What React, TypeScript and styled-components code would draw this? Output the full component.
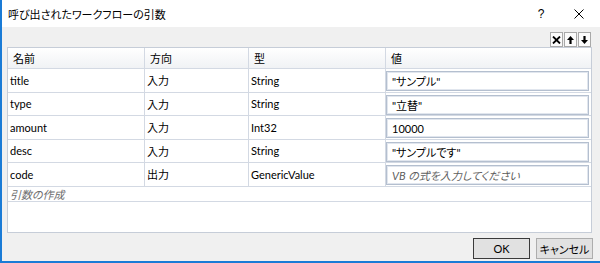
import React from "react";
import styled, { createGlobalStyle } from "styled-components";

const GlobalStyle = createGlobalStyle`
  html, body { margin: 0; padding: 0; background: #ffffff; }
  * { box-sizing: border-box; }
`;

const FONT = `"Lato", "Noto Sans CJK JP", sans-serif`;
const LINE = "#d3d9e3";
const COLS = "137px 104px 137px 1fr";

const Window = styled.div`
  width: 600px;
  height: 263px;
  border-left: 2px solid #1a7bd6;
  border-bottom: 2px solid #1a7bd6;
  background: #f0f0f0;
  display: flex;
  flex-direction: column;
  font-family: ${FONT};
  font-size: 11px;
  color: #000;
  font-feature-settings: "palt";
`;

const TitleBar = styled.div`
  height: 27px;
  flex: 0 0 27px;
  background: #ffffff;
  display: flex;
  align-items: center;
  padding: 0 2px 0 6px;
`;

const TitleText = styled.div`
  font-size: 11px;
  flex: 1;
`;

const CaptionButton = styled.div`
  width: 38px;
  height: 27px;
  display: flex;
  align-items: center;
  justify-content: center;
  font-family: "Liberation Sans", sans-serif;
  font-size: 12px;
`;

const Body = styled.div`
  flex: 1;
  display: flex;
  flex-direction: column;
  padding: 5px 7px 3px 5px;
`;

const Toolbar = styled.div`
  height: 15px;
  display: flex;
  justify-content: flex-end;
  gap: 1px;
  padding-right: 2px;
`;

const ToolButton = styled.div`
  width: 13px;
  height: 15px;
  border: 1px solid #a9a9a9;
  background: #fbfbfb;
  display: flex;
  align-items: center;
  justify-content: center;
`;

const Grid = styled.div`
  height: 186px;
  margin-right: 1px;
  border: 1px solid #c6cdd8;
  background: #ffffff;
  display: flex;
  flex-direction: column;
`;

const Row = styled.div<{ $h: string }>`
  display: grid;
  grid-template-columns: ${COLS};
  height: ${(p) => p.$h};
  flex: 0 0 ${(p) => p.$h};
`;

const HeaderCell = styled.div<{ $last?: boolean }>`
  display: flex;
  align-items: center;
  padding-left: 5px;
  background: linear-gradient(#ffffff, #f0f2f5);
  border-bottom: 1px solid ${LINE};
  border-right: ${(p) => (p.$last ? "none" : `1px solid ${LINE}`)};
`;

const Cell = styled.div<{ $last?: boolean }>`
  display: flex;
  align-items: center;
  padding-left: 2px;
  border-bottom: 1px solid ${LINE};
  border-right: ${(p) => (p.$last ? "none" : `1px solid ${LINE}`)};
  white-space: nowrap;
  overflow: hidden;
`;

const ValueCell = styled.div`
  padding: 2px 2px 0 0;
  border-bottom: 1px solid ${LINE};
`;

const TextBox = styled.div<{ $placeholder?: boolean }>`
  height: 20px;
  border: 1px solid #b4bfcf;
  box-shadow: inset 0 0 0 1px #e1e6ee;
  background: #ffffff;
  display: flex;
  align-items: center;
  padding-left: 5px;
  white-space: nowrap;
  color: ${(p) => (p.$placeholder ? "#5f5f5f" : "#000")};
  font-style: ${(p) => (p.$placeholder ? "italic" : "normal")};
`;

const NewRow = styled.div`
  height: 15px;
  flex: 0 0 15px;
  border-bottom: 1px solid ${LINE};
  display: flex;
  align-items: center;
  padding-left: 2px;
  font-style: italic;
  color: #6d6d6d;
`;

const Footer = styled.div`
  display: flex;
  justify-content: flex-end;
  gap: 6px;
  margin-top: 5px;
`;

const Button = styled.div<{ $default?: boolean }>`
  width: 57px;
  height: 21px;
  border: 1px solid ${(p) => (p.$default ? "#3a3a3a" : "#adadad")};
  background: #e1e1e1;
  display: flex;
  align-items: center;
  justify-content: center;
`;

const rows = [
  { name: "title", dir: "入力", type: "String", value: "\"サンプル\"" },
  { name: "type", dir: "入力", type: "String", value: "\"立替\"" },
  { name: "amount", dir: "入力", type: "Int32", value: "10000" },
  { name: "desc", dir: "入力", type: "String", value: "\"サンプルです\"" },
  { name: "code", dir: "出力", type: "GenericValue", value: "" },
];

const CrossIcon = () => (
  <svg width="9" height="8" viewBox="0 0 9 8">
    <path d="M1 0.5 L8 7.5 M8 0.5 L1 7.5" stroke="#000" strokeWidth="1.8" />
  </svg>
);

const UpIcon = () => (
  <svg width="7" height="8" viewBox="0 0 7 8">
    <path d="M3.5 0 L7 4 L4.6 4 L4.6 8 L2.4 8 L2.4 4 L0 4 Z" fill="#000" />
  </svg>
);

const DownIcon = () => (
  <svg width="7" height="8" viewBox="0 0 7 8">
    <path d="M3.5 8 L7 4 L4.6 4 L4.6 0 L2.4 0 L2.4 4 L0 4 Z" fill="#000" />
  </svg>
);

const CloseIcon = () => (
  <svg width="10" height="10" viewBox="0 0 10 10">
    <path d="M0.5 0.5 L9.5 9.5 M9.5 0.5 L0.5 9.5" stroke="#000" strokeWidth="1" />
  </svg>
);

export default function App() {
  return (
    <>
      <GlobalStyle />
      <Window>
        <TitleBar>
          <TitleText>呼び出されたワークフローの引数</TitleText>
          <CaptionButton>?</CaptionButton>
          <CaptionButton>
            <CloseIcon />
          </CaptionButton>
        </TitleBar>
        <Body>
          <Toolbar>
            <ToolButton>
              <CrossIcon />
            </ToolButton>
            <ToolButton>
              <UpIcon />
            </ToolButton>
            <ToolButton>
              <DownIcon />
            </ToolButton>
          </Toolbar>
          <Grid>
            <Row $h="21px">
              <HeaderCell>名前</HeaderCell>
              <HeaderCell>方向</HeaderCell>
              <HeaderCell>型</HeaderCell>
              <HeaderCell $last>値</HeaderCell>
            </Row>
            {rows.map((r) => (
              <Row $h="23.5px" key={r.name}>
                <Cell>{r.name}</Cell>
                <Cell>{r.dir}</Cell>
                <Cell>{r.type}</Cell>
                <ValueCell>
                  {r.value ? (
                    <TextBox>{r.value}</TextBox>
                  ) : (
                    <TextBox $placeholder>VB の式を入力してください</TextBox>
                  )}
                </ValueCell>
              </Row>
            ))}
            <NewRow>引数の作成</NewRow>
          </Grid>
          <Footer>
            <Button $default>OK</Button>
            <Button>キャンセル</Button>
          </Footer>
        </Body>
      </Window>
    </>
  );
}
